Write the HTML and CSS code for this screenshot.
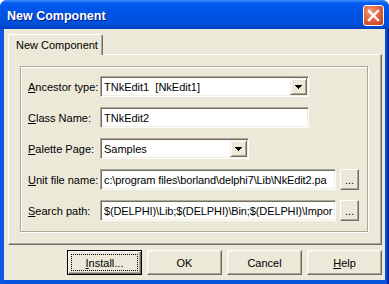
FILE: index.html
```html
<!DOCTYPE html>
<html>
<head>
<meta charset="utf-8">
<link rel="stylesheet" href="styles.css">
</head>
<body>
<div class="window">
  <div class="titlebar">
    <span class="title">New Component</span>
    <span class="close">
      <svg width="19" height="19" viewBox="0 0 19 19"><path d="M5 5 L14 14 M14 5 L5 14" stroke="#fff" stroke-width="2.4" stroke-linecap="square"/></svg>
    </span>
  </div>
  <div class="client">
    <div class="tabs"><div class="tab">New Component</div></div>
    <div class="page">
      <div class="group">
        <div class="label"><u>A</u>ncestor type:</div>
        <div class="field"><div class="edit combo w209"><span class="val">TNkEdit1  [NkEdit1]</span><span class="drop"><svg width="7" height="4" viewBox="0 0 7 4"><path d="M0 0h7v1H0zM1 1h5v1H1zM2 2h3v1H2zM3 3h1v1H3z" fill="#000"/></svg></span></div></div>

        <div class="label"><u>C</u>lass Name:</div>
        <div class="field"><div class="edit w209"><span class="val">TNkEdit2</span></div></div>

        <div class="label"><u>P</u>alette Page:</div>
        <div class="field"><div class="edit combo w149"><span class="val">Samples</span><span class="drop"><svg width="7" height="4" viewBox="0 0 7 4"><path d="M0 0h7v1H0zM1 1h5v1H1zM2 2h3v1H2zM3 3h1v1H3z" fill="#000"/></svg></span></div></div>

        <div class="label"><u>U</u>nit file name:</div>
        <div class="field"><div class="edit w236"><span class="val tight">c:\program files\borland\delphi7\Lib\NkEdit2.pa</span></div><div class="ellipsis">...</div></div>

        <div class="label"><u>S</u>earch path:</div>
        <div class="field"><div class="edit w236"><span class="val tight">$(DELPHI)\Lib;$(DELPHI)\Bin;$(DELPHI)\Impor</span></div><div class="ellipsis">...</div></div>
      </div>
    </div>
    <div class="buttons">
      <div class="btn default"><span class="focus"><u>I</u>nstall...</span></div>
      <div class="btn">OK</div>
      <div class="btn">Cancel</div>
      <div class="btn"><u>H</u>elp</div>
    </div>
  </div>
</div>
</body>
</html>
```

FILE: styles.css
```css
html, body {
  margin: 0;
  padding: 0;
  background: #ffffff;
}

.window {
  width: 389px;
  height: 284px;
  display: flex;
  flex-direction: column;
  background: linear-gradient(90deg, #0831d9 0, #166aee 1px, #0855dd 2px, #0855dd 386px, #0744c8 387px, #001ea0 388px);
  border-radius: 7px 7px 0 0;
  overflow: hidden;
  font-family: "Liberation Sans", Arial, sans-serif;
  font-size: 11px;
  color: #000;
}

.titlebar {
  height: 29px;
  flex: none;
  display: flex;
  align-items: center;
  padding: 3px 5px 0 7px;
  box-sizing: border-box;
  background: linear-gradient(180deg, #3d95ff 0, #2a7ff8 1px, #0a5ef0 3px, #0058ee 6px, #0054e3 14px, #0052de 22px, #004bd2 26px, #0040c0 29px);
}

.title {
  color: #fff;
  font-weight: bold;
  font-size: 12.5px;
  text-shadow: 1px 1px 0 #0a1883;
}

.close {
  margin-left: auto;
  align-self: flex-start;
  margin-top: 2px;
  width: 21px;
  height: 21px;
  box-sizing: border-box;
  border: 1px solid #fff;
  border-radius: 3px;
  background: radial-gradient(circle at 35% 30%, #f0a080 0, #e2643f 45%, #c23a16 100%);
  display: flex;
  align-items: center;
  justify-content: center;
}

.close svg {
  display: block;
}

.client {
  flex: 1;
  margin: 0 4px 4px 4px;
  background: #ece9d8;
  padding: 5px 3px 0 4px;
  display: flex;
  flex-direction: column;
}

.tabs {
  height: 20px;
  display: flex;
  align-items: flex-start;
}

.tab {
  position: relative;
  z-index: 1;
  width: 95px;
  height: 21px;
  box-sizing: border-box;
  background: #ece9d8;
  border-top: 1px solid #fff;
  border-left: 1px solid #fff;
  border-right: 1px solid #716f64;
  border-radius: 2px 2px 0 0;
  box-shadow: inset -1px 0 0 #aca899;
  padding: 4px 0 0 7px;
  white-space: nowrap;
}

.page {
  height: 191px;
  box-sizing: border-box;
  border-top: 1px solid #fff;
  border-left: 1px solid #fff;
  border-right: 1px solid #716f64;
  border-bottom: 1px solid #716f64;
  box-shadow: inset -1px -1px 0 #aca899;
  padding: 11px 0 0 11px;
}

.group {
  width: 348px;
  height: 166px;
  box-sizing: border-box;
  border: 1px solid #aca899;
  box-shadow: inset 1px 1px 0 #fff, 1px 1px 0 #fff;
  padding: 9px 0 0 7px;
  display: grid;
  grid-template-columns: 72px auto;
  grid-auto-rows: 21px;
  row-gap: 10px;
}

.label {
  display: flex;
  align-items: center;
  white-space: nowrap;
}

.field {
  display: flex;
  align-items: stretch;
  gap: 4px;
}

.edit {
  box-sizing: border-box;
  height: 21px;
  background: #fff;
  border: 1px solid;
  border-color: #aca899 #fff #fff #aca899;
  box-shadow: inset 1px 1px 0 #716f64, inset -1px -1px 0 #f1efe2;
  display: flex;
  align-items: center;
  overflow: hidden;
}

.w209 { width: 209px; }
.w149 { width: 149px; }
.w236 { width: 236px; }

.val {
  flex: 1;
  padding-left: 3px;
  white-space: pre;
  overflow: hidden;
}

.val.tight {
  letter-spacing: -0.12px;
}

.drop {
  flex: none;
  width: 17px;
  height: 17px;
  margin-right: 1px;
  box-sizing: border-box;
  background: #ece9d8;
  border: 1px solid;
  border-color: #f1efe2 #716f64 #716f64 #f1efe2;
  box-shadow: inset 1px 1px 0 #fff, inset -1px -1px 0 #aca899;
  display: flex;
  align-items: center;
  justify-content: center;
}

.drop svg {
  display: block;
  margin: 1px 0 0 0;
}

.ellipsis {
  width: 19px;
  height: 21px;
  box-sizing: border-box;
  background: #ece9d8;
  border: 1px solid;
  border-color: #fff #716f64 #716f64 #fff;
  box-shadow: inset -1px -1px 0 #aca899;
  display: flex;
  align-items: flex-end;
  justify-content: center;
  padding-bottom: 3px;
  line-height: 11px;
}

.buttons {
  margin-top: 5px;
  display: flex;
  justify-content: flex-end;
  gap: 5px;
}

.btn {
  width: 75px;
  height: 25px;
  box-sizing: border-box;
  background: #ece9d8;
  border: 1px solid;
  border-color: #fff #716f64 #716f64 #fff;
  box-shadow: inset -1px -1px 0 #aca899, inset 1px 1px 0 #f1efe2;
  display: flex;
  align-items: center;
  justify-content: center;
}

.btn.default {
  border: 1px solid #000;
  box-shadow: inset 1px 1px 0 #fff, inset -1px -1px 0 #716f64, inset -2px -2px 0 #aca899;
  padding: 3px;
  align-items: stretch;
}

.focus {
  flex: 1;
  border: 1px dotted #000;
  display: flex;
  align-items: center;
  justify-content: center;
}
```
